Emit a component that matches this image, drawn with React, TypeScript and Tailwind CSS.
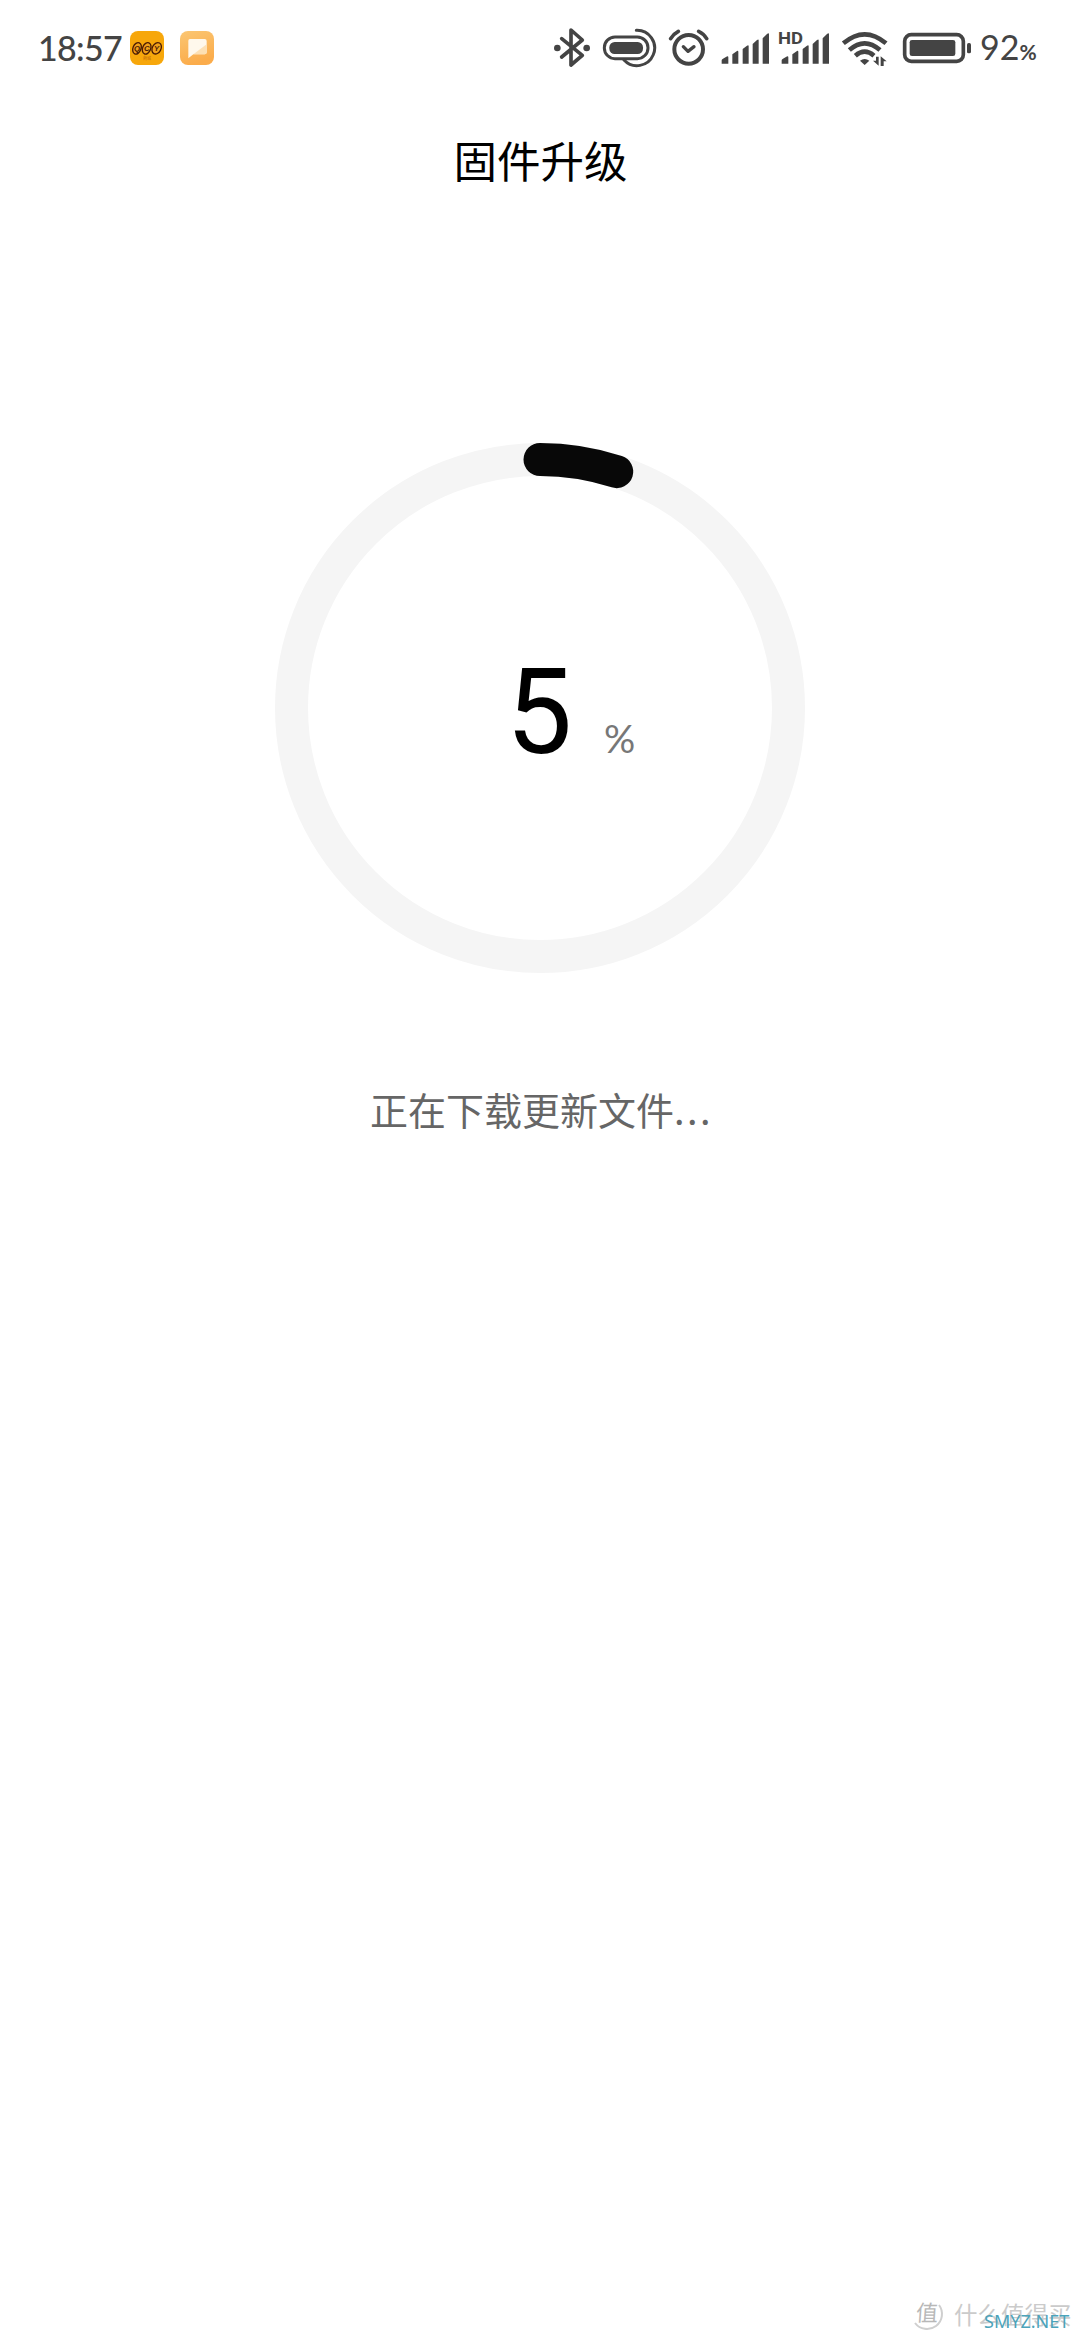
function Bluetooth() {
  return (
    <svg width="38" height="45" viewBox="36 45 114 135" fill="none" stroke="#444" strokeWidth="11" strokeLinejoin="round" strokeLinecap="round">
      <path d="M62 86 L124 136 L90 165 V60 L124 90 L62 141" />
      <circle cx="49" cy="114" r="10" fill="#444" stroke="none" />
      <circle cx="137" cy="114" r="10" fill="#444" stroke="none" />
    </svg>
  );
}

function Capsule() {
  return (
    <svg width="55" height="45" viewBox="183 45 165 135" fill="none" stroke="#444" strokeWidth="9" strokeLinecap="round">
      <rect x="190" y="81" width="131" height="65" rx="32" />
      <rect x="205" y="96" width="101" height="36" rx="16" fill="#444" stroke="none" />
      <path d="M286 61 A53 53 0 1 1 249 150" />
    </svg>
  );
}

function Alarm() {
  return (
    <svg width="41" height="45" viewBox="381 45 123 135" fill="none" stroke="#444" strokeLinecap="round" strokeLinejoin="round">
      <circle cx="443" cy="118" r="43" strokeWidth="12" />
      <path d="M427 110 L441 124 L459 110" strokeWidth="10" />
      <path d="M389 86 Q397 72 412 64 M473 64 Q488 71 497 86" strokeWidth="11" />
    </svg>
  );
}

const bars = "M2 161 V151 Q2 148 6 146 L16 140 Q22 137 22 142 V161 Z M34 161 V133 L48 123 Q52 121 52 126 V161 Z M65 161 V117 L78 107 Q83 104 83 109 V161 Z M95 161 V102 L108 90 Q113 86 113 91 V161 Z M125 161 V85 L138 72 Q144 67 144 73 V161 Z";

function Signal() {
  return (
    <svg width="49" height="45" viewBox="0 45 147 135" fill="#444">
      <path d={bars} />
    </svg>
  );
}

function SignalHD() {
  return (
    <svg width="52" height="45" viewBox="0 45 156 135" fill="#444">
      <path d={bars} transform="translate(9 0)" />
      <path d="M0 60 H76 V104 L60 117 H0 Z" fill="#fff" />
      <text x="0" y="102" fontSize="48" fontWeight="700" fontFamily="Roboto, sans-serif" textLength="75" lengthAdjust="spacingAndGlyphs">HD</text>
    </svg>
  );
}

function Wifi() {
  return (
    <svg width="47" height="45" viewBox="420 45 141 135" fill="none" stroke="#444" strokeWidth="14">
      <path d="M427 100 Q491 46 555 100" />
      <path d="M445 120 Q491 80 537 120" />
      <path d="M463 137 Q491 113 519 137" />
      <path d="M477 152 Q491 142 505 152 L491 165 Z" fill="#444" stroke="none" />
      <path d="M533 140 V167 L516 152 H525 V140 Z M539 168 V139 L557 154 H548 V168 Z" fill="#444" stroke="none" />
    </svg>
  );
}

function Battery() {
  return (
    <svg width="70" height="45" viewBox="63 45 210 135" fill="#444">
      <rect x="71" y="74" width="176" height="80" rx="20" fill="none" stroke="#444" strokeWidth="11" />
      <rect x="86" y="90" width="137" height="48" rx="7" />
      <rect x="258" y="99" width="12" height="31" rx="5" />
    </svg>
  );
}

function QcyIcon() {
  return (
    <svg width="34" height="34" viewBox="0 0 102 102">
      <rect width="102" height="102" rx="24" fill="#f7a70b" />
      <g fill="#f2a11a" stroke="#4b1c05" strokeWidth="4">
        <ellipse cx="21" cy="52" rx="12" ry="18" transform="rotate(22 21 52)" />
        <ellipse cx="50" cy="52" rx="12" ry="18" transform="rotate(22 50 52)" />
        <ellipse cx="80" cy="52" rx="13" ry="18" transform="rotate(28 80 52)" />
      </g>
      <g fill="#4b1c05" fontFamily="Liberation Sans, sans-serif" fontSize="23" fontWeight="700" fontStyle="italic" textAnchor="middle">
        <text x="21" y="60">Q</text>
        <text x="50" y="60">C</text>
        <text x="80" y="61">Y</text>
      </g>
      <text x="51" y="86" fontSize="12" textAnchor="middle" fill="#b9650c" fontFamily="Noto Sans CJK SC, sans-serif">商城</text>
    </svg>
  );
}

function NoteIcon() {
  return (
    <svg width="34" height="34" viewBox="0 0 102 102">
      <defs>
        <linearGradient id="note" x1="0" y1="0" x2="0.3" y2="1">
          <stop offset="0" stopColor="#fbc672" />
          <stop offset="1" stopColor="#fbac4b" />
        </linearGradient>
      </defs>
      <rect width="102" height="102" rx="24" fill="url(#note)" />
      <path d="M30 24 H74 Q80 24 80 30 V64 Q80 70 74 70 H40 L25 82 V29 Q25 24 30 24 Z" fill="#fff8ec" />
      <path d="M80 40 V64 Q80 70 74 70 H40 Z" fill="#fde0b4" />
    </svg>
  );
}

function StatusBar() {
  return (
    <header className="flex h-[98px] items-start pl-[38px] pt-[25px] text-[#444]">
      <div className="flex h-[45px] w-[92px] items-center whitespace-nowrap font-[Lato,sans-serif] text-[34px] font-medium leading-none tracking-[-0.7px]">18:57</div>
      <div className="flex gap-4 pt-[6px]">
        <QcyIcon />
        <NoteIcon />
      </div>
      <div className="ml-auto flex items-start pr-[42px]">
        <div className="mr-[11px]"><Bluetooth /></div>
        <div className="mr-[11px]"><Capsule /></div>
        <div className="mr-3"><Alarm /></div>
        <div className="mr-2"><Signal /></div>
        <div className="mr-[11px]"><SignalHD /></div>
        <div className="mr-[14px]"><Wifi /></div>
        <div className="mr-[8px]"><Battery /></div>
        <div className="flex h-[45px] w-[58px] items-baseline whitespace-nowrap pt-[5px] font-[Lato,sans-serif] leading-none">
          <span className="text-[34px]">92</span>
          <span className="text-[21px] font-bold">%</span>
        </div>
      </div>
    </header>
  );
}

function Progress({ value }: { value: number }) {
  const length = 2 * Math.PI * 248.5;
  return (
    <div className="relative mt-[220px] size-[530px]">
      <svg className="block" width="530" height="530" viewBox="0 0 530 530" fill="none" strokeWidth="33">
        <circle cx="265" cy="265" r="248.5" stroke="#f5f5f5" />
        <circle cx="265" cy="265" r="248.5" stroke="#080808" strokeLinecap="round" strokeDasharray={`${(length * value) / 100} ${length}`} transform="rotate(-90 265 265)" />
      </svg>
      <div className="absolute inset-0 flex items-baseline pl-[231px] pt-[212px] leading-none">
        <span className="w-[98px] font-[Roboto,sans-serif] text-[118px] leading-[117px] text-black">{value}</span>
        <span className="font-[Lato,sans-serif] text-[39px] text-[#777]">%</span>
      </div>
    </div>
  );
}

function Watermark() {
  return (
    <div className="absolute bottom-0 right-0 h-[50px] w-[180px] font-['Noto_Sans_CJK_SC',sans-serif]">
      <div className="flex items-center gap-[10px] pl-[13px] pt-[8px] text-[#cbcbcb]">
        <svg className="overflow-visible" width="31" height="31" viewBox="0 0 31 31">
          <path d="M26 7 A15 15 0 0 1 2 25" fill="none" stroke="#cfcfcf" strokeWidth="2" />
          <text x="4" y="23" fontSize="22" fill="#b8b8b8" transform="skewX(-4)">值</text>
        </svg>
        <span className="whitespace-nowrap text-[23.5px] leading-[30px]">什么值得买</span>
      </div>
      <span className="absolute left-[84px] top-[18px] font-['Noto_Sans',sans-serif] text-[18px] leading-[26px] text-[#4ba3ba]">SMYZ.NET</span>
    </div>
  );
}

export default function App() {
  return (
    <div className="relative flex h-[2340px] w-[1080px] flex-col overflow-hidden bg-white font-['Noto_Sans_CJK_SC',sans-serif]">
      <StatusBar />
      <main className="flex flex-col items-center">
        <h1 className="mt-[30px] h-[95px] pl-px text-[43.5px] leading-[64px] text-black">固件升级</h1>
        <Progress value={5} />
        <p className="mt-[106px] pl-[3px] text-[38px] leading-[60px] text-[#666]">
          正在下载更新文件<span className="tracking-[2.5px]">...</span>
        </p>
      </main>
      <Watermark />
    </div>
  );
}
